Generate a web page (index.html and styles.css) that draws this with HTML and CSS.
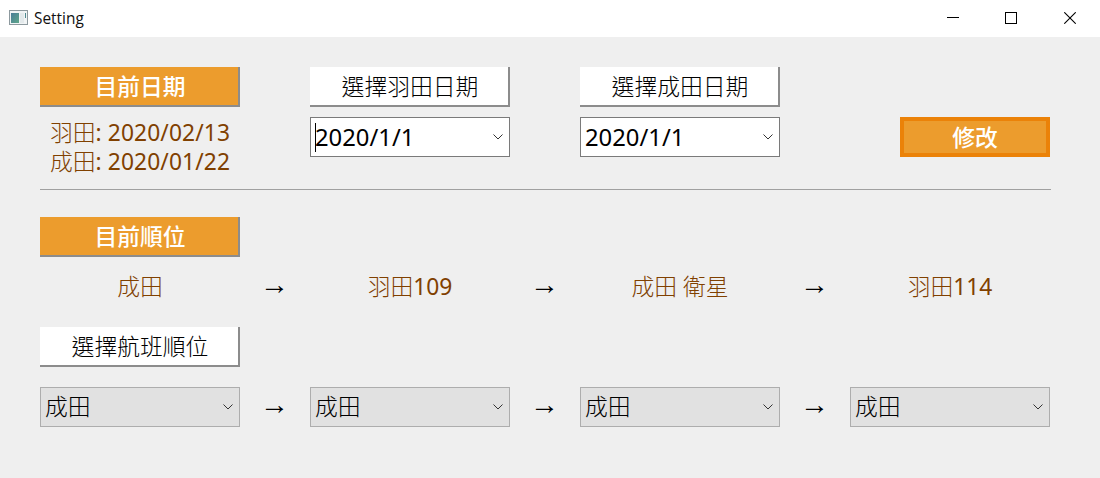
FILE: index.html
```html
<!DOCTYPE html>
<html lang="zh-Hant">
<head>
<meta charset="utf-8">
<title>Setting</title>
<link rel="stylesheet" href="styles.css">
</head>
<body>
<svg class="defs" aria-hidden="true">
  <symbol id="chevron" viewBox="0 0 10 6"><path d="M.5 .5 5 5 9.5 .5" fill="none" stroke="#333" stroke-width="1"/></symbol>
</svg>
<div class="window">
  <header class="titlebar">
    <svg class="app-icon" width="19" height="15" viewBox="0 0 19 15">
      <defs><linearGradient id="g" x1="0" y1="0" x2="1" y2="1"><stop offset="0" stop-color="#4a7d98"/><stop offset="1" stop-color="#5fa78a"/></linearGradient></defs>
      <rect x=".5" y=".5" width="18" height="14" fill="#f1f4f5" stroke="#8d999e"/>
      <rect x="2" y="3" width="8" height="10" fill="url(#g)"/>
      <rect x="11" y="3" width="4" height="10" fill="#e3e9eb"/>
      <rect x="16" y="3" width="1" height="5" fill="#4f8a8f"/>
    </svg>
    <span class="title">Setting</span>
    <div class="controls">
      <svg width="12" height="12" viewBox="0 0 12 12"><path d="M0 5.5h12" stroke="#000" fill="none"/></svg>
      <svg width="12" height="12" viewBox="0 0 12 12"><rect x=".5" y=".5" width="11" height="11" stroke="#000" fill="none"/></svg>
      <svg class="close" width="12" height="12" viewBox="0 0 12 12"><path d="M.3 .3 11.7 11.7M11.7 .3.3 11.7" stroke="#000" stroke-width="1.1" fill="none"/></svg>
    </div>
  </header>
  <main class="content">
    <section class="dates">
      <div class="stack">
        <div class="label accent">目前日期</div>
        <div class="current"><div>羽田<span class="num">: 2020/02/13</span></div><div>成田<span class="num">: 2020/01/22</span></div></div>
      </div>
      <div class="stack">
        <div class="label">選擇羽田日期</div>
        <div class="combo editable focused"><span class="num">2020/1/1</span><svg class="chev"><use href="#chevron"/></svg></div>
      </div>
      <div class="stack">
        <div class="label">選擇成田日期</div>
        <div class="combo editable"><span class="num">2020/1/1</span><svg class="chev"><use href="#chevron"/></svg></div>
      </div>
      <button class="modify">修改</button>
    </section>
    <section class="order">
      <div class="label accent">目前順位</div>
      <div class="flow">
        <span class="value">成田</span><span class="arrow">→</span>
        <span class="value">羽田<span class="num">109</span></span><span class="arrow">→</span>
        <span class="value">成田 衛星</span><span class="arrow">→</span>
        <span class="value">羽田<span class="num">114</span></span>
      </div>
      <div class="label choose">選擇航班順位</div>
      <div class="flow selects">
        <div class="combo"><span>成田</span><svg class="chev"><use href="#chevron"/></svg></div><span class="arrow">→</span>
        <div class="combo"><span>成田</span><svg class="chev"><use href="#chevron"/></svg></div><span class="arrow">→</span>
        <div class="combo"><span>成田</span><svg class="chev"><use href="#chevron"/></svg></div><span class="arrow">→</span>
        <div class="combo"><span>成田</span><svg class="chev"><use href="#chevron"/></svg></div>
      </div>
    </section>
  </main>
</div>
</body>
</html>
```
FILE: styles.css
```css
* { box-sizing: border-box; }
body { margin: 0; }
.defs { display: none; }
.window {
  width: 1100px;
  height: 478px;
  background: #efefef;
  color: #000;
  font: 300 22.8px/30px "Noto Sans", "Noto Sans CJK TC", sans-serif;
  white-space: nowrap;
}
.titlebar {
  display: flex;
  align-items: center;
  height: 37px;
  padding: 0 24px 1px 9px;
  background: #fff;
}
.app-icon { margin-top: -1px; }
.title { margin: 1px 0 0 6px; font: 400 15.4px/20px "Open Sans", sans-serif; color: #111; }
.controls { display: flex; gap: 46px; margin-left: auto; }
.close { margin-left: 1px; }
.content { padding: 30px 49px 0 40px; }
.dates {
  display: grid;
  grid-template-columns: 200px 200px 200px 1fr;
  column-gap: 70px;
  height: 123px;
  border-bottom: 1px solid #a0a0a0;
}
.num { font-weight: 400; }
.stack { display: flex; flex-direction: column; gap: 10px; }
.label {
  display: flex;
  align-items: center;
  justify-content: center;
  width: 200px;
  height: 40px;
  padding: 2px 0 0 2px;
  background: #fff;
  border: solid #8c8c8c;
  border-width: 0 2px 2px 0;
}
.accent { background: #ec9c2d; color: #fff; font-weight: 500; }
.current { padding-top: 1px; color: #804000; text-align: center; line-height: 29px; }
.current .num { letter-spacing: 0.1px; }
.combo {
  display: flex;
  align-items: center;
  justify-content: space-between;
  width: 200px;
  height: 40px;
  padding: 0 6px 0 4px;
  background: #e1e1e1;
  border: 1px solid #adadad;
}
.editable { background: #fff; border-color: #7a7a7a; }
.combo .num { font-size: 23.8px; }
.focused { position: relative; }
.focused::before {
  content: "";
  position: absolute;
  left: 4px;
  top: 5px;
  width: 1px;
  height: 29px;
  background: #000;
}
.chev { width: 10px; height: 6px; }
.modify {
  justify-self: end;
  width: 150px;
  height: 40px;
  margin: 50px 1px 0 0;
  padding: 1px 0 0;
  border: 4px solid #eb8208;
  background: #ec9c2d;
  color: #fff;
  font: inherit;
  font-weight: 500;
}
.order { padding-top: 27px; }
.flow {
  display: grid;
  grid-template-columns: 200px 70px 200px 70px 200px 70px 200px;
  align-items: center;
  height: 40px;
  margin-top: 10px;
}
.value { color: #804000; text-align: center; }
.arrow {
  padding: 0 1px 7px 0;
  text-align: center;
  font: 400 29px/30px "Liberation Serif", serif;
}
.choose { margin-top: 20px; }
.selects { margin-top: 20px; }
```
